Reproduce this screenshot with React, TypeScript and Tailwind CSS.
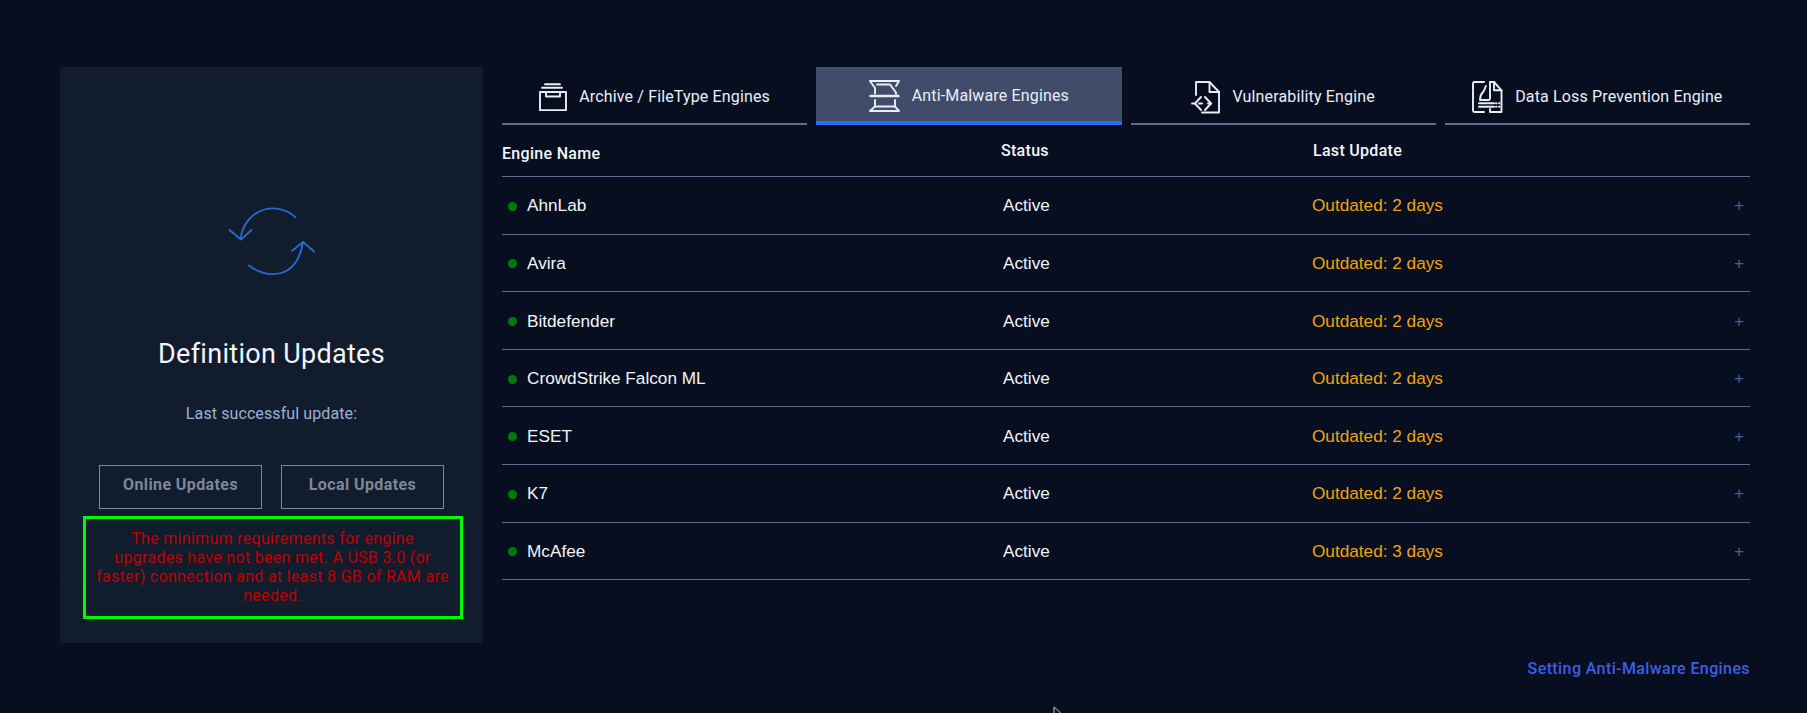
import React from 'react';

const din = "font-['Roboto','Noto_Sans',sans-serif]";
const arial = "font-['Liberation_Sans',Arial,sans-serif]";

const ArchiveIcon = () => (
  <svg width="28" height="28" viewBox="0 0 28 28" fill="none" stroke="currentColor" strokeWidth="1.9" strokeLinecap="round" strokeLinejoin="round">
    <path d="M6 1.200h15M3 4.800h20" />
    <path d="M1 9h26v18.200H1z" />
    <path d="M7 9v4.500h14V9" />
  </svg>
);

const MalwareIcon = () => (
  <svg width="31" height="32" viewBox="0 0 31 32" fill="none" stroke="currentColor" strokeWidth="1.9" strokeLinecap="round" strokeLinejoin="round">
    <path d="M1 1h29l-3 5" />
    <path d="M1 1l5 7v5.500" />
    <path d="M8 4.500h13l6 8v1.500" />
    <path d="M1.500 16h28" strokeWidth="2.400" />
    <path d="M6 20v6.500h20V20" />
    <path d="M6 26.500L1 31h29l-4-4.500" />
  </svg>
);

const VulnIcon = () => (
  <svg width="29" height="33" viewBox="0 0 29 33" fill="none" stroke="currentColor" strokeWidth="1.9" strokeLinecap="round" strokeLinejoin="round">
    <path d="M5 14V1h13.500l9.500 10v20.500H11" />
    <path d="M18.500 1v10H28" />
    <path d="M10 16l-6 6.500 6 6.500" />
    <path d="M1 22.500h3M8 22.500h3" />
    <path d="M14 16l6 6.500-6 6.500" />
    <path d="M17 22.500h3" />
  </svg>
);

const DlpIcon = () => (
  <svg width="31" height="34" viewBox="0 0 31 34" fill="none" stroke="currentColor" strokeWidth="1.9" strokeLinecap="round" strokeLinejoin="round">
    <path d="M12 2H2.500A1.500 1.500 0 0 0 1 3.500v27A1.500 1.500 0 0 0 2.500 32H12" />
    <path d="M18 2h4l7.500 8.300V32H18v-3" />
    <path d="M18 2v17" />
    <path d="M22 2v8.300h7.500" />
    <path d="M14 6c-1.500 2-1 4-3 6-1.500 1.500-3 4-3 8h9" />
    <path d="M7 23.300h15M7 26.700h15" />
    <path d="M24 23.300h.5M27 23.300h.5M24 26.700h.5M27 26.700h.5" />
  </svg>
);

const SyncIcon = () => (
  <svg width="88" height="72" viewBox="0 0 88 72" fill="none" stroke="#2a6ad8" strokeWidth="1.800" strokeLinecap="round" strokeLinejoin="round">
    <path d="M67.500 11.500C60.500 4 48 0.500 36.500 3.500 24 7 14.500 18 12.500 33" />
    <path d="M1.500 24l11.500 9.500L23.500 24" />
    <path d="M21 59.500C29 66 41 70 53 67c11-3 19-13 22-31" />
    <path d="M64 45l11-9 11 9.500" />
  </svg>
);

const tabs = [
  { label: 'Archive / FileType Engines', icon: <ArchiveIcon />, active: false },
  { label: 'Anti-Malware Engines', icon: <MalwareIcon />, active: true },
  { label: 'Vulnerability Engine', icon: <VulnIcon />, active: false },
  { label: 'Data Loss Prevention Engine', icon: <DlpIcon />, active: false },
];

const engines = [
  { name: 'AhnLab', update: 'Outdated: 2 days' },
  { name: 'Avira', update: 'Outdated: 2 days' },
  { name: 'Bitdefender', update: 'Outdated: 2 days' },
  { name: 'CrowdStrike Falcon ML', update: 'Outdated: 2 days' },
  { name: 'ESET', update: 'Outdated: 2 days' },
  { name: 'K7', update: 'Outdated: 2 days' },
  { name: 'McAfee', update: 'Outdated: 3 days' },
];

export default function App() {
  return (
    <div className={`relative flex h-[713px] gap-[19px] overflow-hidden bg-[#070e20] pl-[60px] pt-[67px] ${din}`}>
      {/* Left panel */}
      <div className="flex h-[576px] w-[423px] flex-col items-center bg-[#111c2d]">
        <div className="mt-[139px] h-[72px]">
          <SyncIcon />
        </div>
        <h1 className="mt-[59px] text-[27px] leading-[34px] tracking-[0.3px] text-[#f3f5f9]">Definition Updates</h1>
        <p className="mt-[33px] text-[16px] leading-[20px] tracking-[0.1px] text-[#9db0d4]">Last successful update:</p>
        <div className="mt-[41px] flex gap-[19px]">
          <button className="h-[44px] w-[163px] border border-[#7d8798] pb-[4px] text-[16px] font-bold tracking-[0.4px] text-[#7d8798]">Online Updates</button>
          <button className="h-[44px] w-[163px] border border-[#7d8798] pb-[4px] text-[16px] font-bold tracking-[0.4px] text-[#7d8798]">Local Updates</button>
        </div>
        <div className="ml-[2px] mt-[7px] h-[103px] w-[380px] border-[3px] border-[#00f800] px-[10px] pt-[10px] text-center text-[16px] leading-[19px] tracking-[0.3px] text-[#c00000]">
          The minimum requirements for engine upgrades have not been met. A USB 3.0 (or faster) connection and at least 8 GB of RAM are needed.
        </div>
      </div>

      {/* Right side */}
      <div className="flex w-[1248px] flex-col">
        <div className="flex gap-[9px]">
          {tabs.map((t) => (
            <div
              key={t.label}
              className={`flex h-[58px] flex-1 items-center justify-center gap-[12px] pt-[4px] text-[16px] tracking-[0.15px] text-[#e9eef6] ${
                t.active ? 'border-b-4 border-[#2a6ef0] bg-[#404c69]' : 'border-b-2 border-[#5b6c8f]'
              }`}
            >
              {t.icon}
              <span>{t.label}</span>
            </div>
          ))}
        </div>

        <div className="grid h-[52px] grid-cols-[499px_312px_1fr] border-b border-[#5b6c8f] text-[16px] font-medium tracking-[0.3px] text-[#f3f5f9]">
          <div className="pt-[17px]">Engine Name</div>
          <div className="pt-[14px]">Status</div>
          <div className="pt-[14px]">Last Update</div>
        </div>

        {engines.map((e) => (
          <div key={e.name} className={`flex h-[57.6px] items-center border-b border-[#5b6c8f] pt-[2px] text-[17.2px] ${arial}`}>
            <div className="flex w-[500px] items-center gap-[10px] pl-[6px] text-[#f3f5f9]">
              <span className="size-[9px] rounded-full bg-[#007a0c]" />
              {e.name}
            </div>
            <div className="w-[310px] pl-[1px] text-[#f3f5f9]">Active</div>
            <div className="flex-1 text-[#f0a30a]">{e.update}</div>
            <div className="pr-[6px] text-[#4a5f8a]">+</div>
          </div>
        ))}

        <a className="mt-[77px] self-end text-[16px] font-medium tracking-[0.4px] text-[#3b5ee8]">Setting Anti-Malware Engines</a>
      </div>

      {/* faint hatch peeking out from behind the warning box */}
      <svg className="absolute left-[63px] top-[573px]" width="20" height="10" viewBox="0 0 20 10" fill="none" stroke="#182333" strokeWidth="1.500">
        <path d="M0 10L8 0M5 10l8-10M10 10l8-10M15 10l5-6" />
      </svg>

      {/* mouse pointer caught in the capture */}
      <svg className="absolute left-[1053px] top-[706px]" width="11" height="16" viewBox="0 0 11 16" fill="#070e20" stroke="#c8ccd4" strokeWidth="1">
        <path d="M1 1v12l3-3 2 5 2-1-2-5h4z" />
      </svg>
    </div>
  );
}
